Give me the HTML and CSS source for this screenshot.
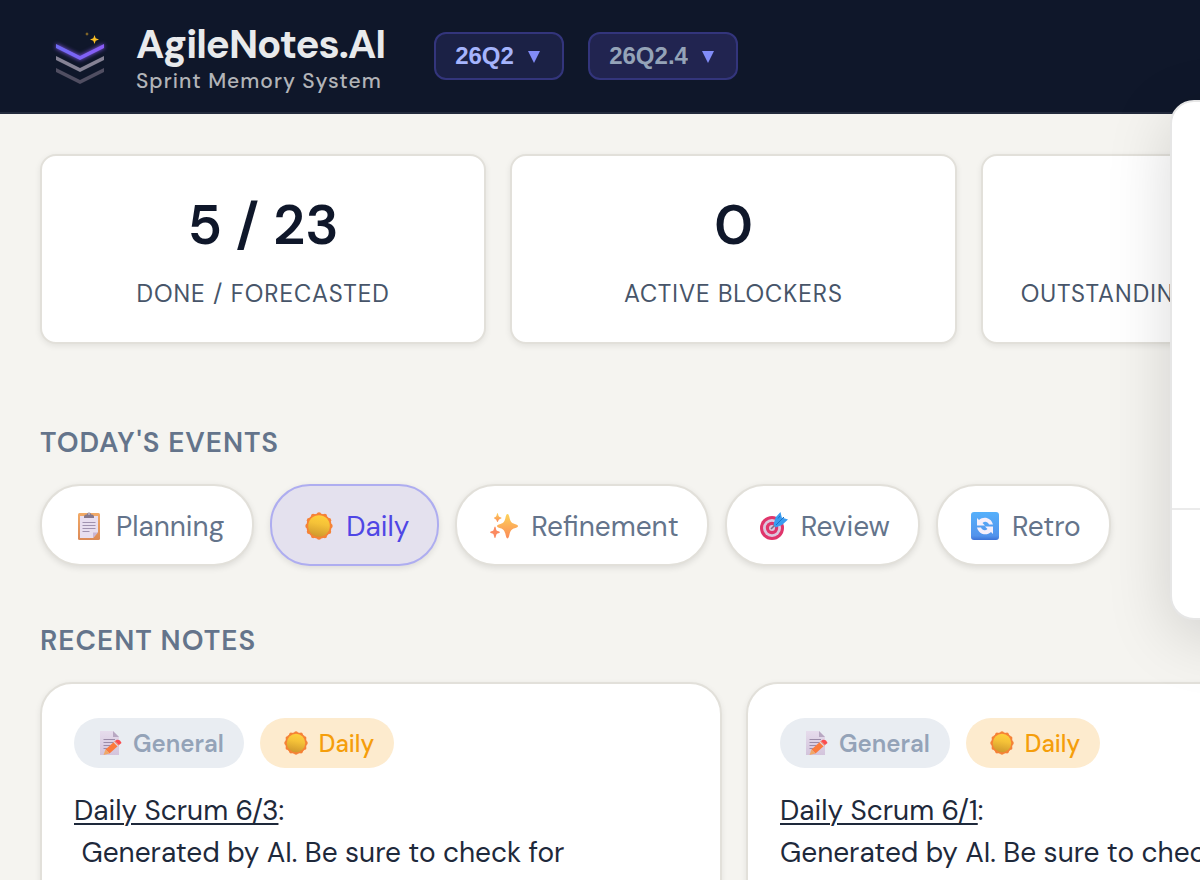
FILE: index.html
```html
<!DOCTYPE html>
<html lang="en">
<head>
    <meta charset="UTF-8">
    <meta name="viewport" content="width=device-width, initial-scale=1.0">
    <title>AgileNotes.AI</title>
    <link rel="stylesheet" href="styles.css">
</head>
<body>
    <!-- Shared icons -->
    <svg class="icon-defs" aria-hidden="true">
        <defs>
            <linearGradient id="sunFace" x1="0.6" y1="0" x2="0.4" y2="1">
                <stop offset="0" stop-color="#ffd03a"/>
                <stop offset="0.4" stop-color="#f5c238"/>
                <stop offset="1" stop-color="#cf982c"/>
            </linearGradient>
            <linearGradient id="sparkle" x1="0.5" y1="0" x2="0.5" y2="1">
                <stop offset="0" stop-color="#fdd35a"/>
                <stop offset="1" stop-color="#fb8a58"/>
            </linearGradient>
            <linearGradient id="board" x1="0" y1="0" x2="0" y2="1">
                <stop offset="0" stop-color="#f2aa66"/>
                <stop offset="1" stop-color="#dc8a58"/>
            </linearGradient>
            <linearGradient id="blueTile" x1="0" y1="0" x2="0" y2="1">
                <stop offset="0" stop-color="#55b0fb"/>
                <stop offset="0.85" stop-color="#5393ec"/>
                <stop offset="1" stop-color="#3d72d6"/>
            </linearGradient>
            <linearGradient id="paper" x1="0" y1="0" x2="0" y2="1">
                <stop offset="0" stop-color="#e6dcec"/>
                <stop offset="1" stop-color="#d3c4dc"/>
            </linearGradient>
        </defs>
        <symbol id="icon-clipboard" viewBox="0 0 28 28">
            <rect x="3" y="1" width="22" height="27" rx="1.5" fill="url(#board)"/>
            <path d="M5 4h18v16l-5 6H5z" fill="#e8def0"/>
            <path d="M18 26v-5.500h5z" fill="#c9b6d6"/>
            <path d="M7.500 10.500h13M7.500 13.500h13M7.500 16.500h13M7.500 19.500h7" stroke="#a092b0" stroke-width="1"/>
            <path d="M9 6V4.500Q9 3 11 2.500h1a2 2 0 0 1 4 0h1q2 .5 2 2V6z" fill="#85788c"/>
            <circle cx="14" cy="2" r="0.8" fill="#e8def0"/>
        </symbol>
        <symbol id="icon-sun" viewBox="0 0 28 28">
            <g fill="#f58236">
                <circle cx="14" cy="14" r="12.600"/>
                <circle cx="14" cy="2.500" r="2.200"/>
                <circle cx="19.800" cy="4" r="2.200"/>
                <circle cx="24" cy="8.200" r="2.200"/>
                <circle cx="25.500" cy="14" r="2.200"/>
                <circle cx="24" cy="19.800" r="2.200"/>
                <circle cx="19.800" cy="24" r="2.200"/>
                <circle cx="14" cy="25.500" r="2.200"/>
                <circle cx="8.200" cy="24" r="2.200"/>
                <circle cx="4" cy="19.800" r="2.200"/>
                <circle cx="2.500" cy="14" r="2.200"/>
                <circle cx="4" cy="8.200" r="2.200"/>
                <circle cx="8.200" cy="4" r="2.200"/>
            </g>
            <circle cx="14" cy="14" r="10.800" fill="url(#sunFace)"/>
        </symbol>
        <symbol id="icon-sparkles" viewBox="0 0 28 28">
            <g fill="url(#sparkle)">
                <path d="M17.500 2c1.200 0 1.500 1.500 2.200 4.500 1 3.500 2 4.500 5 5.400C27 12.600 28 13 28 14s-1 1.500-3.300 2.200c-3 .9-4 1.900-5 5.400-.7 3-1 4.900-2.200 4.900s-1.500-1.900-2.200-4.900c-1-3.500-2-4.500-4.800-5.400C8 15.500 7 15 7 14s1-1.400 3.500-2.100c2.800-.9 3.800-1.900 4.800-5.400.7-3 1-4.500 2.200-4.500z"/>
                <path d="M7.500 1c.6 0 .8 3 1.500 3.500.6.600 2.500.8 2.500 1.500S9.600 7 9 7.500C8.300 8.200 8.100 10 7.500 10S6.700 8.200 6 7.500C5.500 7 4 6.700 4 6s1.500-.9 2-1.500C6.700 4 6.900 1 7.500 1z"/>
            </g>
            <path d="M5 14.500c.8 0 1 3.300 1.700 4 .7.700 3.300.8 3.300 1.700s-2.600 1-3.300 1.700c-.7.800-.9 4.100-1.700 4.100s-1-3.300-1.700-4.100C2.600 21.200 0 21 0 20.200s2.600-1 3.300-1.700c.7-.7.900-4 1.700-4z" fill="#fb8a60"/>
        </symbol>
        <symbol id="icon-target" viewBox="0 0 28 28">
            <circle cx="12" cy="16" r="12" fill="#e0356b"/>
            <circle cx="12" cy="16" r="9" fill="#dcc6dd"/>
            <circle cx="12" cy="16" r="6.200" fill="#e0356b"/>
            <circle cx="12" cy="16" r="3" fill="#dcc6dd"/>
            <path d="M11 17l6-6" stroke="#7d6d88" stroke-width="1.600"/>
            <path d="M13.500 12.500L15.500 5.500 20.500 0l1.300 5.500L28 7.500l-6 5.500-6.500 2.500z" fill="#3a9df0"/>
            <path d="M16 13l8-8M18 6.500l2-2.500" stroke="#1c72c8" stroke-width="1"/>
        </symbol>
        <symbol id="icon-retro" viewBox="0 0 28 28">
            <rect width="28" height="28" rx="3" fill="url(#blueTile)"/>
            <path d="M6 6l2 2C12 4 20 5 22 12.500h-4c-1.300-3-4.300-3.700-6.500-1.500l2.500 2.500H6z" fill="#f6effb"/>
            <path d="M22 22l-2-2C16 24 8 23 6 15.500h4c1.300 3 4.300 3.700 6.500 1.500L14 14.500h8z" fill="#f6effb"/>
        </symbol>
        <symbol id="icon-memo" viewBox="0 0 24 24">
            <path d="M2 0h13l6 6v18H2z" fill="url(#paper)"/>
            <path d="M15 0v6h6z" fill="#b8a8c2"/>
            <path d="M5.500 8.500H17M5.500 11.500h10M5.500 14.500h7M5.500 17.500h4" stroke="#9b8ba8" stroke-width="1"/>
            <path d="M7.500 18.500L17 10l4 4-9.500 8.500z" fill="#fb7a3c"/>
            <path d="M7.500 18.500l4 4L5.500 24z" fill="#f0a868"/>
            <path d="M17 10l1.800-1.300q3.500-.5 4.700 3.300L21 14z" fill="#fa4d50"/>
            <path d="M16 11l4 4" stroke="#e0d0e0" stroke-width="1.200"/>
        </symbol>
    </svg>

    <div class="page">
        <header class="header">
            <div class="brand">
                <svg class="logo" viewBox="0 0 56 56" aria-hidden="true">
                    <defs>
                        <linearGradient id="logoTop" x1="0" y1="0" x2="1" y2="0">
                            <stop offset="0" stop-color="#6f6bf5"/>
                            <stop offset="1" stop-color="#8b5cf6"/>
                        </linearGradient>
                    </defs>
                    <path d="M4 38l24 12 24-12v4L28 54 4 42z" fill="#504e61"/>
                    <path d="M4 26l24 12 24-12v4L28 42 4 30z" fill="#858294"/>
                    <path class="logo-glow" d="M4 14l24 12 24-12v4L28 30 4 18z" fill="url(#logoTop)"/>
                    <path d="M42.500 5l1.200 3.300L47 9.500l-3.300 1.200-1.200 3.300-1.200-3.300L38 9.500l3.300-1.200z" fill="#fbbf24"/>
                    <path d="M35 2l.6 1.400L37 4l-1.400.6L35 6l-.6-1.400L33 4l1.400-.6z" fill="#a8812a"/>
                </svg>
                <div class="brand-text">
                    <h1>AgileNotes.AI</h1>
                    <p>Sprint Memory System</p>
                </div>
            </div>
            <div class="selectors">
                <div class="selector">
                    <select aria-label="Quarter">
                        <option>26Q2</option>
                    </select>
                    <span class="arrow"></span>
                </div>
                <div class="selector sprint">
                    <select aria-label="Sprint">
                        <option>26Q2.4</option>
                    </select>
                    <span class="arrow"></span>
                </div>
            </div>
        </header>

        <main>
            <section class="stats">
                <div class="stat-card">
                    <div class="stat-value">5 / 23</div>
                    <div class="stat-label">DONE / FORECASTED</div>
                </div>
                <div class="stat-card">
                    <div class="stat-value">0</div>
                    <div class="stat-label">ACTIVE BLOCKERS</div>
                </div>
                <div class="stat-card">
                    <div class="stat-value"></div>
                    <div class="stat-label">OUTSTANDING ACTION POINTS</div>
                </div>
            </section>

            <section class="events">
                <h2>TODAY'S EVENTS</h2>
                <div class="event-list">
                    <button class="event"><svg class="icon"><use href="#icon-clipboard"/></svg>Planning</button>
                    <button class="event active"><svg class="icon"><use href="#icon-sun"/></svg>Daily</button>
                    <button class="event"><svg class="icon"><use href="#icon-sparkles"/></svg>Refinement</button>
                    <button class="event"><svg class="icon"><use href="#icon-target"/></svg>Review</button>
                    <button class="event"><svg class="icon"><use href="#icon-retro"/></svg>Retro</button>
                </div>
            </section>

            <section class="notes">
                <h2>RECENT NOTES</h2>
                <div class="note-grid">
                    <article class="note">
                        <div class="tags">
                            <span class="tag general"><svg class="icon"><use href="#icon-memo"/></svg>General</span>
                            <span class="tag daily"><svg class="icon"><use href="#icon-sun"/></svg>Daily</span>
                        </div>
                        <p><u>Daily Scrum 6/3</u>:<br>&nbsp;Generated by AI. Be sure to check for</p>
                    </article>
                    <article class="note">
                        <div class="tags">
                            <span class="tag general"><svg class="icon"><use href="#icon-memo"/></svg>General</span>
                            <span class="tag daily"><svg class="icon"><use href="#icon-sun"/></svg>Daily</span>
                        </div>
                        <p><u>Daily Scrum 6/1</u>:<br>Generated by AI. Be sure to check for</p>
                    </article>
                </div>
            </section>
        </main>

        <aside class="side-panel">
            <div class="side-panel-body"></div>
            <div class="side-panel-footer"></div>
        </aside>
    </div>
</body>
</html>
```
FILE: styles.css
```css
* {
    box-sizing: border-box;
    margin: 0;
    padding: 0;
}
html {
    overflow: hidden;
}
body {
    font-family: "DM Sans", Lato, sans-serif;
    background: #f5f4f0;
    color: #1e293b;
}
.icon-defs {
    position: absolute;
    width: 0;
    height: 0;
}
.page {
    position: relative;
    min-width: 1468px;
}

/* Header */
.header {
    display: flex;
    align-items: center;
    gap: 49px;
    height: 114px;
    padding: 0 52px;
    background: #0f172a;
    border-bottom: 2px solid #232b3d;
}
.brand {
    display: flex;
    align-items: center;
    gap: 28px;
    padding-top: 4px;
}
.logo {
    width: 56px;
    height: 56px;
}
.logo-glow {
    filter: drop-shadow(0 0 2px #8b5cf6);
}
.brand-text h1 {
    font-size: 40px;
    line-height: 46px;
    font-weight: 700;
    letter-spacing: -1px;
    color: #e8eaec;
}
.brand-text p {
    font-size: 21px;
    line-height: 28px;
    font-weight: 500;
    letter-spacing: 1px;
    color: #b2b4b8;
}
.selectors {
    display: flex;
    gap: 24px;
}
.selector {
    position: relative;
}
.selector select {
    appearance: none;
    height: 48px;
    padding: 0 48px 2px 19px;
    border: 2px solid #33357c;
    border-radius: 12px;
    background: #1b2145;
    color: #a5b4fc;
    font: bold 24px "Liberation Sans", Arial, sans-serif;
}
.selector.sprint select {
    background: #212450;
    color: #94a3b8;
}
.arrow {
    position: absolute;
    right: 24px;
    top: 19px;
    border: 6px solid transparent;
    border-top: 12px solid #818cf8;
    border-bottom: none;
    pointer-events: none;
}

/* Content */
main {
    display: flex;
    flex-direction: column;
    padding: 40px;
}
h2 {
    margin-bottom: 22px;
    font-size: 28px;
    line-height: 38px;
    font-weight: 600;
    letter-spacing: 1px;
    color: #64748b;
}
.stats {
    display: grid;
    grid-template-columns: repeat(3, 1fr);
    gap: 24px;
    margin-bottom: 80px;
}
.stat-card {
    padding: 32px 38px 30px;
    background: #fff;
    border: 2px solid #e2e0da;
    border-radius: 16px;
    box-shadow: 0 2px 6px rgba(0, 0, 0, 0.08);
    text-align: center;
}
.stat-value {
    height: 74px;
    margin-bottom: 14px;
    font-size: 56px;
    line-height: 74px;
    font-weight: 600;
    color: #0f172a;
}
.stat-label {
    font-size: 24px;
    line-height: 36px;
    letter-spacing: 1px;
    white-space: nowrap;
    color: #475569;
}
.events {
    margin-bottom: 56px;
}
.event-list {
    display: flex;
    gap: 16px;
}
.event {
    display: flex;
    align-items: center;
    gap: 13px;
    height: 82px;
    padding: 2px 28px 0 33px;
    border: 2px solid #e2e0da;
    border-radius: 40px;
    background: #fff;
    box-shadow: 0 2px 6px rgba(0, 0, 0, 0.1);
    color: #64748b;
    font-family: inherit;
    font-size: 28px;
    cursor: pointer;
}
.event .icon {
    width: 28px;
    height: 28px;
}
.event.active {
    background: #e4e1ee;
    border-color: #aeadf0;
    color: #4f46e5;
}

/* Notes */
.note-grid {
    display: grid;
    grid-template-columns: repeat(2, 1fr);
    gap: 24px;
}
.note {
    min-height: 320px;
    padding: 34px 32px;
    background: #fff;
    border: 2px solid #e2e0da;
    border-radius: 32px;
    box-shadow: 0 2px 6px rgba(0, 0, 0, 0.08);
}
.tags {
    display: flex;
    gap: 16px;
    margin-bottom: 22px;
}
.tag {
    display: flex;
    align-items: center;
    gap: 11px;
    height: 50px;
    padding: 0 20px 0 24px;
    border-radius: 25px;
    font-size: 24px;
    font-weight: 600;
}
.tag .icon {
    width: 24px;
    height: 24px;
}
.tag.general {
    background: #e9edf2;
    color: #94a3b8;
}
.tag.daily {
    background: #fdebce;
    color: #f59e0b;
    font-weight: 500;
}
.note p {
    font-size: 28px;
    line-height: 42px;
}
.note u {
    text-decoration-thickness: 2px;
    text-underline-offset: 3px;
}

/* Floating panel on the right */
.side-panel {
    position: absolute;
    top: 100px;
    right: 18px;
    width: 280px;
    background: #fff;
    border: 2px solid #e6e6e6;
    border-radius: 24px;
    box-shadow: 0 16px 64px rgba(0, 0, 0, 0.15);
}
.side-panel-body {
    height: 408px;
    border-bottom: 2px solid #ebebeb;
}
.side-panel-footer {
    height: 108px;
}
```
